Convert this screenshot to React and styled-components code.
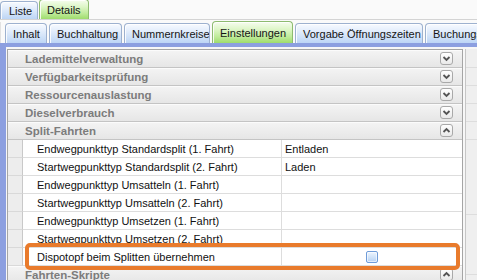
import React from "react";
import styled, { createGlobalStyle } from "styled-components";

const Global = createGlobalStyle`
  html, body { margin: 0; padding: 0; background: #fafafa; }
  body { font-family: "Liberation Sans", Arial, sans-serif; }
`;

const Screen = styled.div`
  position: relative;
  width: 477px;
  height: 280px;
  overflow: hidden;
  background: #fafafa;
  font-family: "Liberation Sans", Arial, sans-serif;
  font-size: 11px;
  color: #141414;
`;

const TopTabBar = styled.div`
  display: flex;
  align-items: flex-end;
  gap: 1px;
  height: 19px;
  border-bottom: 1px solid #d4d4d4;
`;

const SubTabBar = styled.div`
  display: flex;
  align-items: flex-end;
  gap: 2px;
  height: 21px;
  margin-top: 2px;
  padding-left: 4px;
  border-left: 1px solid #e2e2e2;
  white-space: nowrap;
`;

const blueTab = "linear-gradient(to bottom, #f7faff 0%, #e4eefc 35%, #cfe1f8 70%, #bdd5f5 100%)";
const greenTab = "linear-gradient(to bottom, #f6fdef 0%, #def6c8 35%, #bfeb9a 70%, #9edc6c 100%)";

const Tab = styled.div`
  box-sizing: border-box;
  flex: none;
  width: ${(p) => p.$w}px;
  height: ${(p) => (p.$active ? p.$h + 2 : p.$h)}px;
  padding-left: ${(p) => p.$pad}px;
  display: flex;
  align-items: center;
  border: 1px solid ${(p) => (p.$active ? "#8dbb70" : "#9db1cf")};
  border-bottom: none;
  border-radius: 4px 4px 0 0;
  background: ${(p) => (p.$active ? greenTab : blueTab)};
  box-shadow: inset 1px 1px 0 rgba(255, 255, 255, 0.85);
  color: #151515;
  white-space: nowrap;
  overflow: hidden;
`;

const Frame = styled.div`
  display: flex;
  gap: 2px;
  height: 240px;
  border-top: 4px solid #8c9fe0;
  border-left: 6px solid #8c9fe0;
  padding: 2px 0 0 1px;
  background: #f7f7f7;
`;

const Panel = styled.div`
  flex: none;
  width: 456px;
  box-sizing: border-box;
  border: 1px solid #a5a5a5;
  border-bottom: none;
  background: #ffffff;
`;

const SideColumn = styled.div`
  flex: 1;
  border-left: 1px solid #c6c6c6;
  background: #efefef;
`;

const SideStub = styled.div`
  height: ${(p) => p.$h}px;
  box-sizing: border-box;
  border-bottom: 1px solid #dddddd;
`;

const HeaderRow = styled.div`
  box-sizing: border-box;
  height: 18px;
  display: flex;
  align-items: center;
  padding: 0 9px 0 17px;
  background: linear-gradient(to bottom, #f4f4f4, #e6e6e6);
  border-bottom: 1px solid #c4c4c4;
  box-shadow: inset 0 1px 0 #fbfbfb;
  font-size: 11.5px;
  font-weight: bold;
  color: #7c7c7c;
`;

const ToggleButton = styled.div`
  box-sizing: border-box;
  margin-left: auto;
  width: 13px;
  height: 13px;
  border: 1px solid #a9a9a9;
  border-radius: 3px;
  background: linear-gradient(to bottom, #ffffff, #e9e9e9);
  display: flex;
  align-items: center;
  justify-content: center;
`;

const PropRow = styled.div`
  display: grid;
  grid-template-columns: 15px 259px 1fr;
  height: 18px;
`;

const Indent = styled.div`
  box-sizing: border-box;
  background: #ededed;
  border-right: 1px solid #c9c9c9;
  border-bottom: 1px solid #d9d9d9;
`;

const NameCell = styled.div`
  box-sizing: border-box;
  display: flex;
  align-items: center;
  padding-left: 14px;
  border-right: 1px solid #dddddd;
  border-bottom: 1px solid #dddddd;
  white-space: nowrap;
  overflow: hidden;
  color: #111;
`;

const ValueCell = styled.div`
  box-sizing: border-box;
  display: flex;
  align-items: center;
  justify-content: ${(p) => (p.$center ? "center" : "flex-start")};
  padding-left: ${(p) => (p.$center ? 0 : 3)}px;
  border-bottom: 1px solid #dddddd;
  white-space: nowrap;
  color: #111;
`;

const CheckBox = styled.div`
  box-sizing: border-box;
  width: 12px;
  height: 12px;
  border: 1px solid #6f9cd9;
  border-radius: 2px;
  background: linear-gradient(to bottom, #eef5fe, #cfe2f8 55%, #b5d1f4);
  box-shadow: inset 0 0 0 1px rgba(255, 255, 255, 0.6);
`;

const Highlight = styled.div`
  position: absolute;
  left: 25px;
  top: 243px;
  width: 435px;
  height: 27px;
  box-sizing: border-box;
  border: 4px solid #e97b2c;
  border-radius: 5px;
  pointer-events: none;
`;

const Chevron = ({ up }) => (
  <svg width="9" height="9" viewBox="0 0 9 9">
    <path
      d={up ? "M1.5 6 L4.5 3 L7.5 6" : "M1.5 3 L4.5 6 L7.5 3"}
      fill="none"
      stroke="#555"
      strokeWidth="1.8"
    />
  </svg>
);

const topTabs = [
  { label: "Liste", w: 38, h: 18, pad: 8 },
  { label: "Details", w: 50, h: 18, pad: 7, active: true },
];

const subTabs = [
  { label: "Inhalt", w: 42 },
  { label: "Buchhaltung", w: 73 },
  { label: "Nummernkreise", w: 86 },
  { label: "Einstellungen", w: 81, active: true },
  { label: "Vorgabe Öffnungszeiten", w: 128 },
  { label: "Buchungsvorgaben", w: 100 },
];

const groups = [
  { label: "Lademittelverwaltung" },
  { label: "Verfügbarkeitsprüfung" },
  { label: "Ressourcenauslastung" },
  { label: "Dieselverbrauch" },
  { label: "Split-Fahrten", open: true },
];

const props = [
  { name: "Endwegpunkttyp Standardsplit (1. Fahrt)", value: "Entladen" },
  { name: "Startwegpunkttyp Standardsplit (2. Fahrt)", value: "Laden" },
  { name: "Endwegpunkttyp Umsatteln (1. Fahrt)", value: "" },
  { name: "Startwegpunkttyp Umsatteln (2. Fahrt)", value: "" },
  { name: "Endwegpunkttyp Umsetzen (1. Fahrt)", value: "" },
  { name: "Startwegpunkttyp Umsetzen (2. Fahrt)", value: "" },
  { name: "Dispotopf beim Splitten übernehmen", check: true },
];

const sideStubs = [19, 18, 18, 18, 18, 75, 60];

export default function App() {
  return (
    <>
      <Global />
      <Screen>
        <TopTabBar>
          {topTabs.map((t) => (
            <Tab key={t.label} $w={t.w} $h={t.h} $pad={t.pad} $active={t.active}>
              {t.label}
            </Tab>
          ))}
        </TopTabBar>
        <SubTabBar>
          {subTabs.map((t) => (
            <Tab key={t.label} $w={t.w} $h={20} $pad={7} $active={t.active}>
              {t.label}
            </Tab>
          ))}
        </SubTabBar>
        <Frame>
          <Panel>
            {groups.map((g) => (
              <HeaderRow key={g.label}>
                {g.label}
                <ToggleButton>
                  <Chevron up={g.open} />
                </ToggleButton>
              </HeaderRow>
            ))}
            {props.map((p) => (
              <PropRow key={p.name}>
                <Indent />
                <NameCell>{p.name}</NameCell>
                <ValueCell $center={p.check}>
                  {p.check ? <CheckBox /> : p.value}
                </ValueCell>
              </PropRow>
            ))}
            <HeaderRow>
              Fahrten-Skripte
              <ToggleButton>
                <Chevron up />
              </ToggleButton>
            </HeaderRow>
          </Panel>
          <SideColumn>
            {sideStubs.map((h, i) => (
              <SideStub key={i} $h={h} />
            ))}
          </SideColumn>
        </Frame>
        <Highlight />
      </Screen>
    </>
  );
}
